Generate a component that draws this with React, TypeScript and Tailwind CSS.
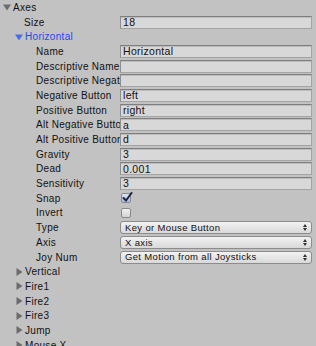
import React from "react";

type Row =
  | { kind: "text"; label: string; value: string }
  | { kind: "check"; label: string; checked: boolean }
  | { kind: "select"; label: string; value: string };

const rows: Row[] = [
  { kind: "text", label: "Name", value: "Horizontal" },
  { kind: "text", label: "Descriptive Name", value: "" },
  { kind: "text", label: "Descriptive Negative Name", value: "" },
  { kind: "text", label: "Negative Button", value: "left" },
  { kind: "text", label: "Positive Button", value: "right" },
  { kind: "text", label: "Alt Negative Button", value: "a" },
  { kind: "text", label: "Alt Positive Button", value: "d" },
  { kind: "text", label: "Gravity", value: "3" },
  { kind: "text", label: "Dead", value: "0.001" },
  { kind: "text", label: "Sensitivity", value: "3" },
  { kind: "check", label: "Snap", checked: true },
  { kind: "check", label: "Invert", checked: false },
  { kind: "select", label: "Type", value: "Key or Mouse Button" },
  { kind: "select", label: "Axis", value: "X axis" },
  { kind: "select", label: "Joy Num", value: "Get Motion from all Joysticks" },
];

const collapsed = ["Vertical", "Fire1", "Fire2", "Fire3", "Jump", "Mouse X"];

function Arrow({ open, blue }: { open?: boolean; blue?: boolean }) {
  const color = blue ? "#4a6fe8" : "#6b6b6b";
  return (
    <svg width="8" height="8" viewBox="0 0 8 8" className="shrink-0">
      {open ? <path d="M0 1.5 H8 L4 7.5 Z" fill={color} /> : <path d="M1.5 0 V8 L7.5 4 Z" fill={color} />}
    </svg>
  );
}

function TextField({ value }: { value: string }) {
  return (
    <div className="h-[13px] w-[192px] bg-[#d8d8d8] border border-[#a4a4a4] border-t-[#7e7e7e] border-l-[#8e8e8e] pl-[2px] flex items-center text-[10.5px] leading-none text-[#111] shadow-[inset_0_1px_0_#bdbdbd]">
      {value}
    </div>
  );
}

function Check({ checked }: { checked: boolean }) {
  return (
    <div
      className={`ml-[1px] w-[10px] h-[10px] rounded-[2px] border border-[#8a8a8a] bg-gradient-to-b relative ${
        checked ? "from-[#dde6f5] to-[#a9bcdc]" : "from-[#f0f0f0] to-[#d2d2d2]"
      }`}
    >
      {checked && (
        <svg width="11" height="11" viewBox="0 0 11 11" className="absolute -top-[2px] left-[0px]">
          <path d="M1.5 6 L4 8.5 L9.5 1" stroke="#1c2440" strokeWidth="2" fill="none" strokeLinecap="round" />
        </svg>
      )}
    </div>
  );
}

function Select({ value }: { value: string }) {
  return (
    <div className="h-[13px] w-[192px] rounded-[3px] border border-[#8c8c8c] bg-gradient-to-b from-[#f2f2f2] to-[#d9d9d9] flex items-center justify-between pl-[4px] pr-[4px] text-[9.5px] leading-none tracking-[0.35px] text-[#111]">
      <span>{value}</span>
      <span className="flex flex-col items-center gap-[1px]">
        <svg width="4" height="3" viewBox="0 0 4 3"><path d="M0 3 L2 0 L4 3 Z" fill="#333" /></svg>
        <svg width="4" height="3" viewBox="0 0 4 3"><path d="M0 0 L2 3 L4 0 Z" fill="#333" /></svg>
      </span>
    </div>
  );
}

export default function App() {
  return (
    <div
      className="w-[316px] h-[346px] overflow-hidden bg-[#c2c2c2] text-[#111] text-[10px] tracking-[0.3px]"
      style={{ fontFamily: '"Liberation Sans", Arial, sans-serif' }}
    >
      <div className="flex flex-col">
        <div className="h-[14.7px] flex items-center gap-[2px] pl-[3px]">
          <Arrow open />
          <span>Axes</span>
        </div>
        <div className="h-[14.7px] flex items-center">
          <span className="w-[120px] pl-[24px]">Size</span>
          <TextField value="18" />
        </div>
        <div className="h-[14.7px] flex items-center gap-[2px] pl-[15px] text-[#1e4ae8]">
          <Arrow open blue />
          <span>Horizontal</span>
        </div>
        {rows.map((r) => (
          <div key={r.label} className="h-[14.7px] flex items-center">
            <span className="w-[120px] pl-[36px] pr-[1px] whitespace-nowrap overflow-hidden">{r.label}</span>
            {r.kind === "text" && <TextField value={r.value} />}
            {r.kind === "check" && <Check checked={r.checked} />}
            {r.kind === "select" && <Select value={r.value} />}
          </div>
        ))}
        {collapsed.map((name) => (
          <div key={name} className="h-[14.7px] flex items-center gap-[2px] pl-[15px]">
            <Arrow />
            <span>{name}</span>
          </div>
        ))}
      </div>
    </div>
  );
}
